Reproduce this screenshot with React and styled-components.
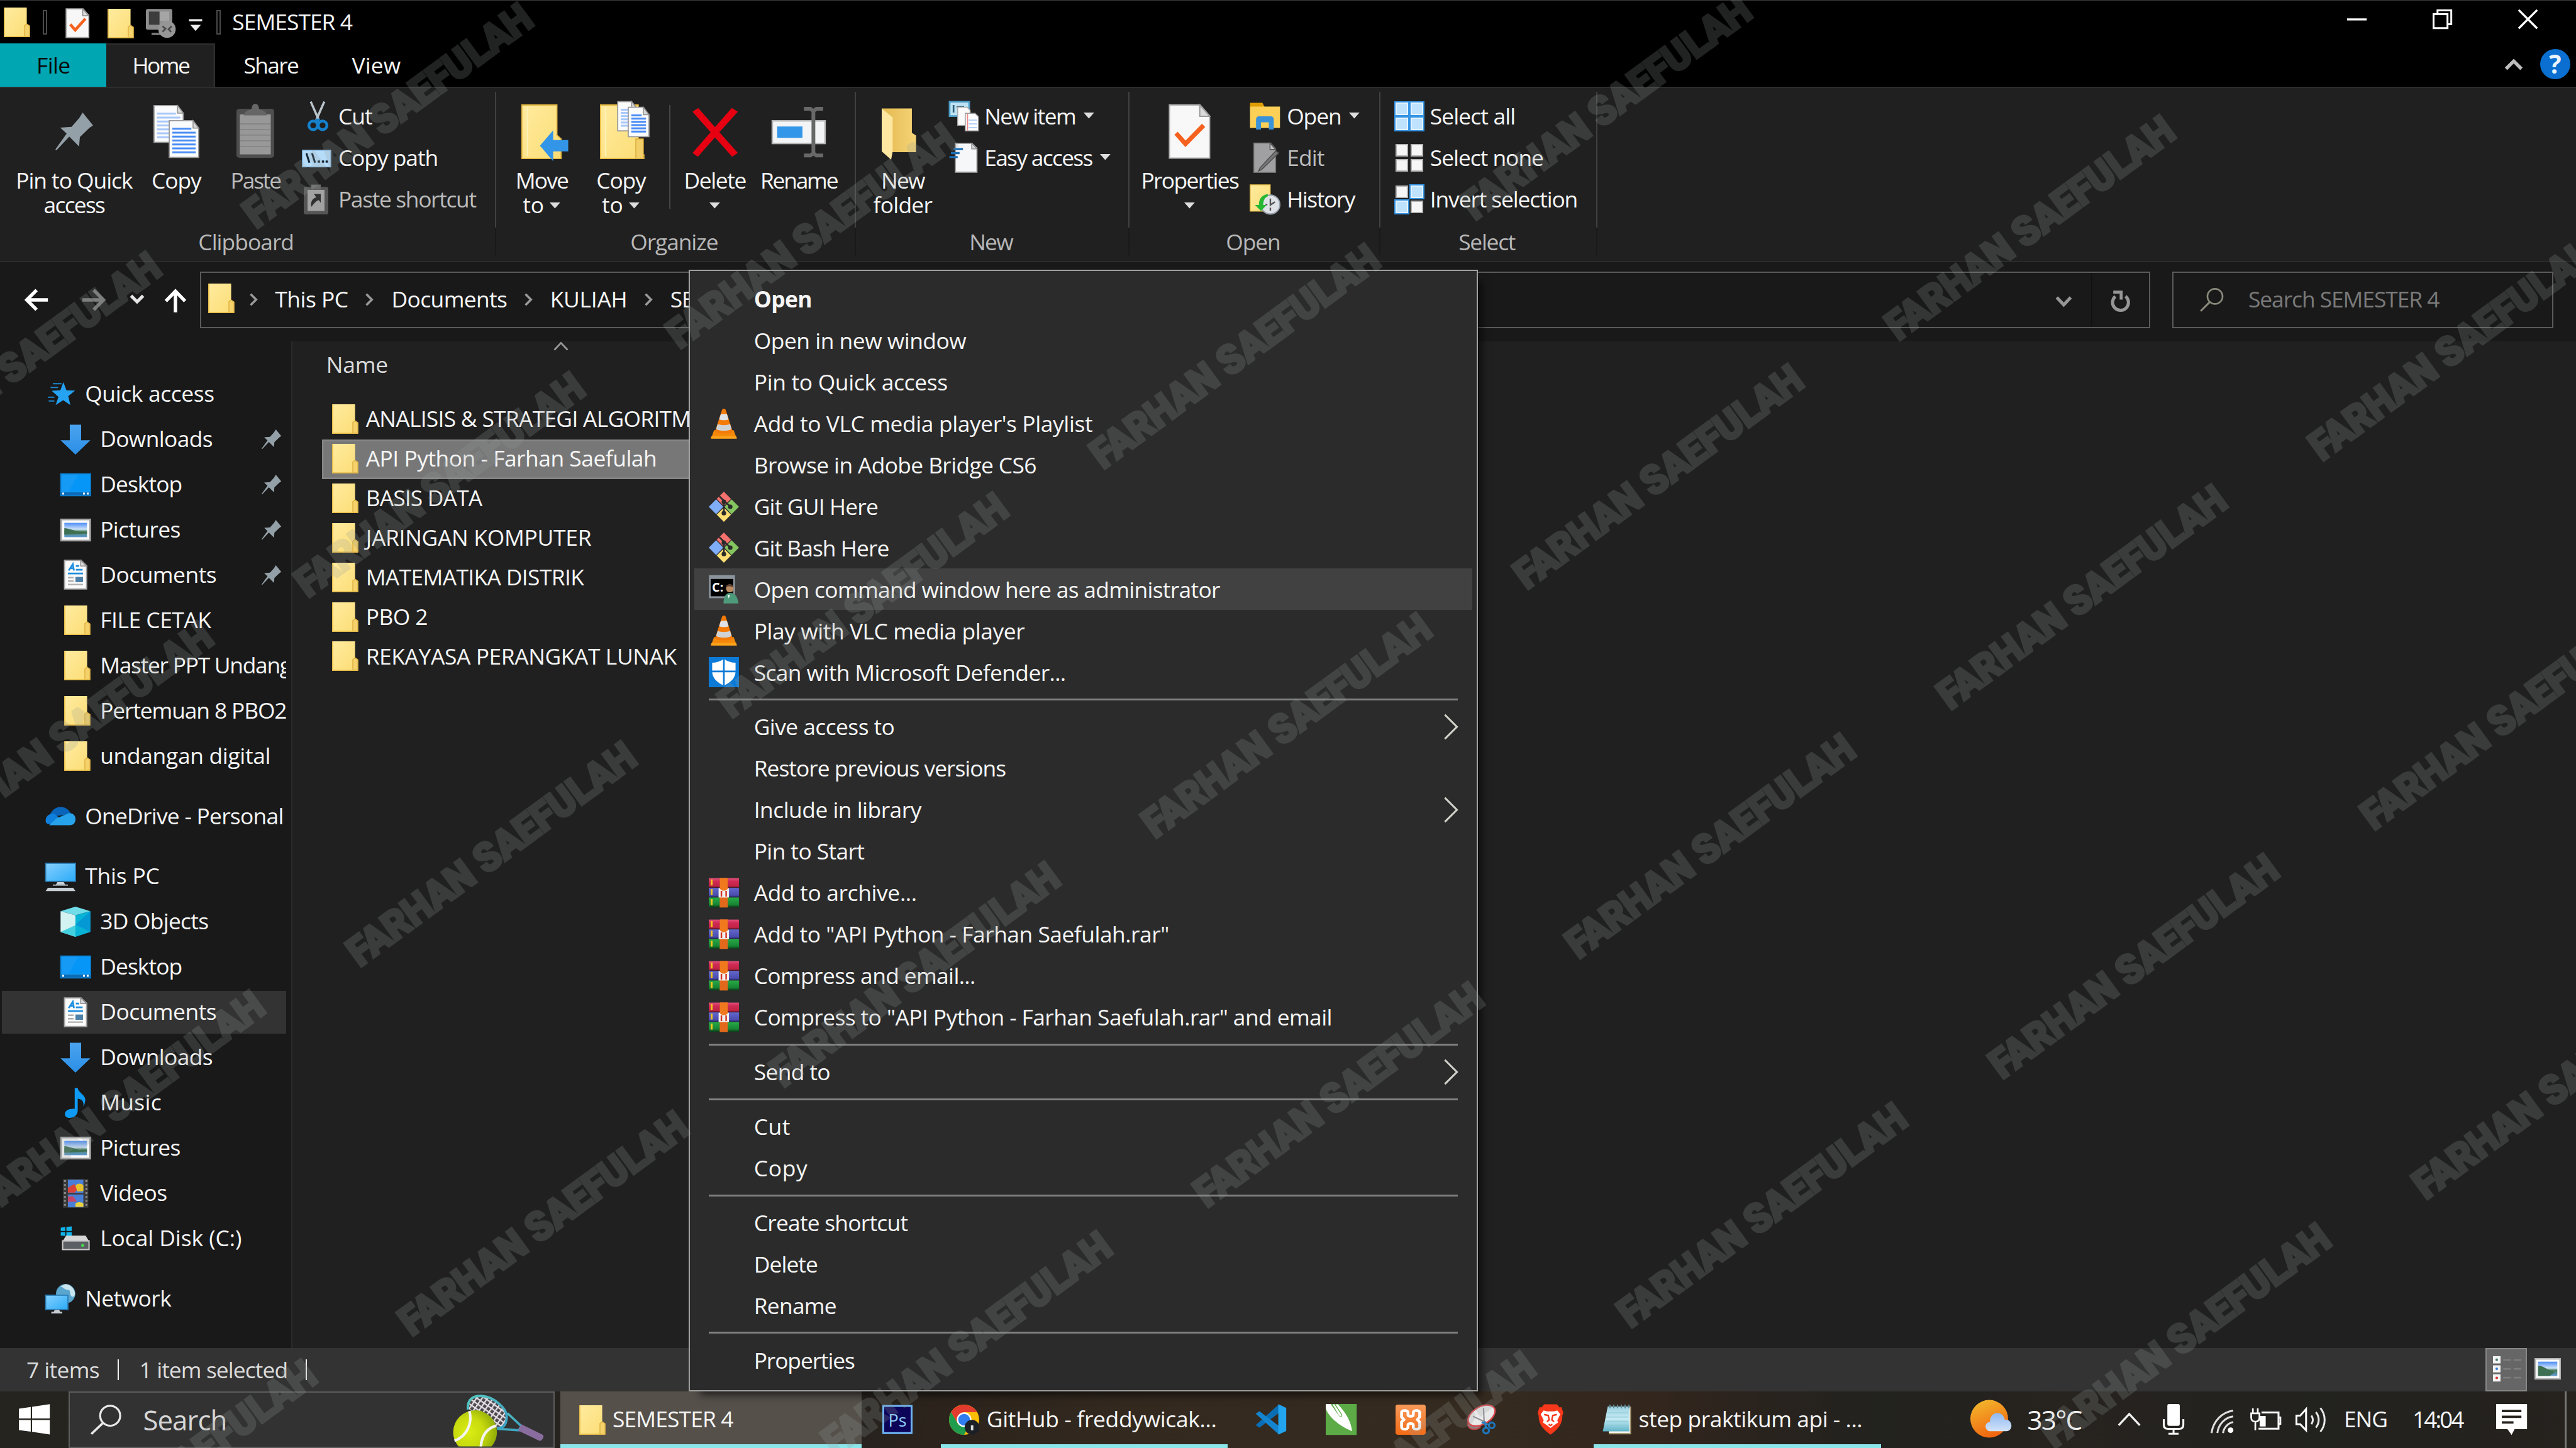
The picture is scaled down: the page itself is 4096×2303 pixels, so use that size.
import React from "react";
import styled, { createGlobalStyle, css } from "styled-components";

/* The desktop is designed on a 1366 x 768 grid; u() turns grid units into screen pixels. */
const UNIT = 4096 / 1366;
const u = (n) => `${+(n * UNIT).toFixed(3)}px`;

const FONT = '"Open Sans", "Noto Sans", "Liberation Sans", sans-serif';

const GlobalStyle = createGlobalStyle`
  * { box-sizing: border-box; }
  html, body { margin: 0; padding: 0; background: #000; }
  body { font-family: ${FONT}; color: #fff; overflow: hidden; }
`;

/* ---------- text ---------- */

const meter = document.createElement("canvas").getContext("2d");
const tracking = (text, width, size, weight) => {
  meter.font = `${weight} 100px ${FONT}`;
  const natural = (meter.measureText(text).width * size) / 100;
  return (width - natural) / text.length;
};

const TextBox = styled.span`
  flex: none;
  display: block;
  width: ${(p) => u(p.$w)};
  margin-left: ${(p) => u(p.$ml)};
  padding-bottom: ${(p) => u(p.$lift)};
  text-indent: ${u(-0.2)};
  white-space: pre;
  font-size: ${(p) => u(p.$size)};
  font-weight: ${(p) => p.$weight};
  line-height: ${(p) => u(p.$size + 1.4)};
  letter-spacing: ${(p) => u(p.$track)};
  color: ${(p) => p.$color};
`;

const Text = ({ w, ml = 0, size = 11.8, weight = 400, color = "#f6f6f6", lift = 0.6, children }) => (
  <TextBox
    $w={w}
    $ml={ml}
    $size={size}
    $weight={weight}
    $color={color}
    $lift={lift}
    $track={tracking(children, w + 0.6, size, weight)}
  >
    {children}
  </TextBox>
);

/* ---------- icons ---------- */

const Svg = styled.svg`
  flex: none;
  display: block;
  overflow: visible;
  width: ${(p) => u(p.$w)};
  height: ${(p) => u(p.$h)};
  margin-left: ${(p) => u(p.$ml)};
  margin-top: ${(p) => u(p.$mt)};
`;

const HiddenDefs = styled.svg`
  position: absolute;
  width: 0;
  height: 0;
`;

const Gradients = () => (
  <HiddenDefs aria-hidden="true">
    <defs>
      <linearGradient id="folder" x1="0" y1="0" x2="1" y2="1">
        <stop offset="0" stopColor="#ffeb9f" />
        <stop offset="1" stopColor="#fcdd75" />
      </linearGradient>
      <linearGradient id="folderDark" x1="0" y1="0" x2="1" y2="0">
        <stop offset="0" stopColor="#e3b94f" />
        <stop offset="1" stopColor="#f6d477" />
      </linearGradient>
      <linearGradient id="screen" x1="0" y1="0" x2="1" y2="1">
        <stop offset="0" stopColor="#86d0ff" />
        <stop offset="1" stopColor="#2babf8" />
      </linearGradient>
      <linearGradient id="arrow" x1="0" y1="0" x2="0" y2="1">
        <stop offset="0" stopColor="#4aa3ef" />
        <stop offset="1" stopColor="#2b8fe6" />
      </linearGradient>
      <linearGradient id="photo" x1="0" y1="0" x2="0" y2="1">
        <stop offset="0" stopColor="#4d8df5" />
        <stop offset="0.45" stopColor="#cfe4fb" />
        <stop offset="0.6" stopColor="#4b7f5e" />
        <stop offset="1" stopColor="#5f9bd6" />
      </linearGradient>
      <linearGradient id="sun" x1="0.2" y1="0" x2="0.6" y2="1">
        <stop offset="0" stopColor="#f2b82c" />
        <stop offset="1" stopColor="#f2620f" />
      </linearGradient>
      <linearGradient id="cloud" x1="0" y1="0" x2="0" y2="1">
        <stop offset="0" stopColor="#8fb8ef" />
        <stop offset="1" stopColor="#d3e3fa" />
      </linearGradient>
      <radialGradient id="ball" cx="0.35" cy="0.5" r="0.7">
        <stop offset="0" stopColor="#dcee14" />
        <stop offset="0.5" stopColor="#c6da0e" />
        <stop offset="1" stopColor="#86a307" />
      </radialGradient>
      <linearGradient id="frame" x1="0" y1="0" x2="1" y2="1">
        <stop offset="0" stopColor="#54c6bd" />
        <stop offset="1" stopColor="#3a9fc4" />
      </linearGradient>
      <linearGradient id="pad" x1="0" y1="0" x2="0" y2="1">
        <stop offset="0" stopColor="#9fd3e2" />
        <stop offset="0.5" stopColor="#c6ebf3" />
        <stop offset="1" stopColor="#5fb4c9" />
      </linearGradient>
      <linearGradient id="xampp" x1="0" y1="0" x2="0" y2="1">
        <stop offset="0" stopColor="#f79a5a" />
        <stop offset="1" stopColor="#f46b15" />
      </linearGradient>
      <linearGradient id="bookRed" x1="0" y1="0" x2="0" y2="1">
        <stop offset="0" stopColor="#e0507c" />
        <stop offset="0.35" stopColor="#cf2a55" />
        <stop offset="0.85" stopColor="#c02344" />
        <stop offset="1" stopColor="#5c1024" />
      </linearGradient>
      <linearGradient id="bookBlue" x1="0" y1="0" x2="0" y2="1">
        <stop offset="0" stopColor="#6367cc" />
        <stop offset="0.8" stopColor="#4a4cae" />
        <stop offset="1" stopColor="#26275e" />
      </linearGradient>
      <linearGradient id="bookGreen" x1="0" y1="0" x2="0" y2="1">
        <stop offset="0" stopColor="#27ab45" />
        <stop offset="0.7" stopColor="#178534" />
        <stop offset="1" stopColor="#0b3516" />
      </linearGradient>
      <pattern id="strings" width="2.4" height="2.4" patternUnits="userSpaceOnUse" patternTransform="rotate(35)">
        <rect width="2.4" height="2.4" fill="#4a484c" />
        <path d="M0 0h2.4M0 0v2.4" stroke="#e6dfe6" strokeWidth="1.5" />
      </pattern>
    </defs>
  </HiddenDefs>
);

const Sheet = ({ x, y, w, h, line = "#4a8cf5", rows = 7 }) => (
  <g>
    <path d={`M${x} ${y}h${w - 3}l3 4v${h - 4}h${-w}z`} fill="#fafbfc" stroke="#9a9a9a" strokeWidth="0.6" />
    <path d={`M${x + w - 3} ${y}v4h3z`} fill="#d8d8d8" stroke="#8f8f8f" strokeWidth="0.5" />
    {Array.from({ length: rows }, (_, i) => (
      <path
        key={i}
        d={`M${x + 1.6} ${y + 4.3 + (i * (h - 7)) / (rows - 1)}h${i === 0 ? w - 5.5 : w - 3.2}`}
        stroke={line}
        strokeWidth="1"
      />
    ))}
  </g>
);

const pinShape = "M14.5 0L20 6.8 18 8.2 13 13 12.6 18 7.4 12.8 0.6 20 0 19.6 6 11.2 2.6 8 8.6 7.6 12.6 3z";

const art = {
  folder: [14, 16, <>
    <path d="M0.3 0.3h11.9v8.8l1.5 1v5.6H0.3z" fill="url(#folder)" />
    <path d="M11 15.7V10l1.2-0.9 1.5 1v5.6z" fill="#f5d26b" stroke="#dfb445" strokeWidth="0.5" />
    <path d="M0.3 0.3v15.4h13.4" fill="none" stroke="#e6bd4a" strokeWidth="0.6" />
  </>],
  docCheck: [13, 16, <>
    <path d="M0.4 0.4h9l3 3.4v11.8H0.4z" fill="#f7f7f7" stroke="#a9a9a9" strokeWidth="0.6" />
    <path d="M9.2 0.4v3.6h3.2z" fill="#ddd" stroke="#8a8a8a" strokeWidth="0.5" />
    <path d="M2.6 8.6l2.6 3 5.4-6" fill="none" stroke="#f5611e" strokeWidth="1.5" />
  </>],
  undoPc: [16, 16, <>
    <rect x="0" y="0.4" width="14" height="11" rx="1" fill="#8d8d8d" />
    <rect x="1.6" y="1.8" width="5.6" height="7" fill="#3c3c3c" />
    <rect x="7.4" y="1.8" width="5" height="5" fill="#a5a5a5" />
    <path d="M3 13h6v1.3H3z" fill="#777" />
    <circle cx="11.2" cy="11.2" r="4.6" fill="#969696" />
    <path d="M8.8 12.5l1.6-1.6-1.6-1.3M13.6 9.6l-1.6 1.6 1.4 1.4" fill="none" stroke="#4a4a4a" strokeWidth="0.9" />
  </>],
  dropBar: [8, 6.4, <path d="M0.5 0.2h7v1.1h-7zM1.2 3.2h5.6L4 6.4z" fill="#eee" />],
  minimize: [10.4, 10.4, <path d="M0 5.3h10.4" stroke="#fff" strokeWidth="1.1" />],
  restore: [10.4, 10.4, <path d="M0.5 2.5h7.4v7.4H0.5zM2.6 2.4V0.5h7.3v7.3H8" fill="none" stroke="#fff" strokeWidth="1" />],
  close: [10.4, 10.4, <path d="M0.3 0.3l9.8 9.8M10.1 0.3L0.3 10.1" stroke="#fff" strokeWidth="1.1" />],
  ribbonUp: [10, 6, <path d="M0.9 5.5L5 1.4l4.1 4.1" fill="none" stroke="#bdbdbd" strokeWidth="1.8" />],
  help: [16, 16, <>
    <circle cx="8" cy="8" r="8" fill="#0a6fd0" />
    <text x="8" y="13" textAnchor="middle" fontFamily={FONT} fontWeight="700" fontSize="13.5" fill="#eaf4ff">?</text>
  </>],

  pinBig: [32, 32, <path transform="translate(6 6)" d={pinShape} fill="#94a0a8" />],
  pinSmall: [10.5, 10.5, <path transform="scale(0.52)" d={pinShape} fill="#94a0a8" />],
  copyBig: [32, 32, <>
    <Sheet x={4.3} y={2.3} w={15.5} h={19.5} line="#a8c8fa" />
    <Sheet x={12.4} y={10.3} w={15.6} h={19.5} />
  </>],
  pasteBig: [32, 32, <>
    <rect x="6" y="4" width="20" height="26" rx="1.5" fill="#4e4e4e" />
    <rect x="7.8" y="7" width="16.4" height="21.2" fill="#989898" />
    <path d="M10 7.5c0-2 2-2.8 4-3.2 0-4 4-4 4 0 2 0.4 4 1.2 4 3.2z" fill="#666" />
    <path d="M8 12h16M8 15h16M8 18h16M8 21h16M8 24h16" stroke="#858585" strokeWidth="0.6" />
  </>],
  moveBig: [32, 32, <>
    <path d="M5.6 2h18.6v16l2.200 2v10.400H5.600z" fill="url(#folder)" stroke="#e3b640" strokeWidth="0.6" />
    <path d="M8.6 3v26" stroke="#fff0b5" strokeWidth="0.8" />
    <path d="M15.2 23.6l7-8.200v5.200h8v6h-8v5.200z" fill="#3395e8" />
  </>],
  copyToBig: [32, 32, <>
    <path d="M5.3 2h20v26.4h3v2H5.3z" fill="url(#folder)" stroke="#e3b640" strokeWidth="0.6" />
    <path d="M24 30.4V20h4v10.4z" fill="#f2cf69" stroke="#dbae3e" strokeWidth="0.5" />
    <path d="M8 3v26" stroke="#fff0b5" strokeWidth="0.8" />
    <Sheet x={14.4} y={0.2} w={10.4} h={15.5} line="#a8c8fa" rows={6} />
    <Sheet x={20} y={3.2} w={11} h={15.6} rows={6} />
  </>],
  deleteBig: [32, 32, <path d="M4.4 5.6L7.400 3.6 16.3 13.8 25.2 3.6 28.4 5.600 18.6 16.400 28.400 27.400 25.400 29.400 16.3 19.200 7.200 29.400 4.400 27.400 14 16.400z" fill="#e60012" />],
  renameBig: [32, 32, <>
    <rect x="2" y="10.4" width="28" height="12" fill="#f2f4f5" stroke="#b5b5b5" strokeWidth="0.8" />
    <rect x="4.6" y="13.4" width="13.4" height="6" fill="#3396e8" />
    <path d="M18.8 4h3.4l1.6 1.2 1.6-1.2h3.6M18.8 28.8h3.4l1.6-1.2 1.6 1.2h3.6M23.8 4.9v23" fill="none" stroke="#686868" strokeWidth="2" />
  </>],
  newFolderBig: [32, 32, <>
    <path d="M5 3.8h16v13l2.2 1.4v8.8H9z" fill="url(#folderDark)" />
    <path d="M5 3.8l5.8 4.8v18L10 31 5 26.6z" fill="#fde7a1" />
  </>],
  propertiesBig: [32, 32, <>
    <path d="M5.5 2h16.3l5 5.8v22.4H5.5z" fill="#f8f8f9" stroke="#b0b0b0" strokeWidth="0.7" />
    <path d="M21.6 2v6h5.2z" fill="#dadada" stroke="#999" strokeWidth="0.6" />
    <path d="M9 17l5 5.6 9.6-9.8" fill="none" stroke="#f5611e" strokeWidth="2.4" />
  </>],
  down: [5.6, 3.2, <path d="M0 0h5.6L2.8 3.2z" fill="#dedede" />],

  cut: [16, 16, <>
    <path d="M4.7 0.2L9 10M11.9 0.2L7.6 10" stroke="#b9c3ca" strokeWidth="1.2" />
    <circle cx="6" cy="12.8" r="2.3" fill="none" stroke="#1581cc" strokeWidth="1.5" />
    <circle cx="11" cy="12.8" r="2.3" fill="none" stroke="#1581cc" strokeWidth="1.5" />
    <path d="M7.4 9.2h2v3h-2z" fill="#1581cc" />
  </>],
  copyPath: [16, 16, <>
    <rect x="0.3" y="4" width="15" height="8.8" fill="#b5dcf9" stroke="#8ec2ea" strokeWidth="0.5" />
    <path d="M2.4 5.6l1.6 5M5.4 5.6l1.6 5" stroke="#123" strokeWidth="1" />
    <path d="M8.4 9.4h1.2v1.2H8.4zM10.6 9.4h1.2v1.2h-1.2zM12.6 9.4h1.2v1.2h-1.2z" fill="#123" />
  </>],
  pasteShortcut: [16, 16, <>
    <rect x="1" y="1.4" width="13" height="14.6" rx="1" fill="#555" />
    <rect x="3" y="3" width="9" height="11.2" fill="#a2a2a2" />
    <path d="M5 0.2h5v2.6H5z" fill="#6a6a6a" />
    <path d="M5 12c-0.6-2.4 0.6-4.6 2.6-5L6.4 5.2H10v4.6L9 8.4C7.6 8.8 6.6 10 5 12z" fill="#303030" />
  </>],
  newItem: [16, 16, <>
    <rect x="0.3" y="0.3" width="10.4" height="7.6" fill="#bfe3f3" stroke="#4c9cc7" strokeWidth="0.9" />
    <path d="M2.4 2v4M4 3h4" stroke="#33617c" strokeWidth="0.9" />
    <path d="M4.6 3.2h5l1.6 1.6v8H4.6z" fill="#fbfbfb" stroke="#aaa" strokeWidth="0.5" />
    <path d="M8.6 6.4h5.2l1.8 1.8v7.6h-7z" fill="#fdfdfd" stroke="#999" strokeWidth="0.5" />
    <path d="M9.8 6.6v9" stroke="#ee8a8a" strokeWidth="0.6" />
    <path d="M10.4 10h4.6M10.4 12h4.6M10.4 14h4.6" stroke="#b7d1f7" strokeWidth="0.7" />
  </>],
  easyAccess: [16, 16, <>
    <path d="M3.4 0.4h8.8l2.6 2.6v12.6H3.4z" fill="#f6f7f8" stroke="#aaa" strokeWidth="0.6" />
    <path d="M12 0.4v2.9h2.8z" fill="#d5d5d5" stroke="#888" strokeWidth="0.4" />
    <path d="M2.4 3.4h5M1 5.5h4.6M0.2 7.6h4.4" stroke="#1c6fb5" strokeWidth="1.1" />
  </>],
  openSmall: [16, 16, <>
    <path d="M0.2 0.8h6.6l1.2 2.4H0.2z" fill="#e09d00" />
    <path d="M0.2 2.8h15.9v11.4H0.2z" fill="#fccf56" />
    <path d="M3.4 15V9.6c0-1 0.6-1.6 1.6-1.6h6.2c1 0 1.6 0.6 1.6 1.6V15h-2.6v-3.8H6V15z" fill="#3a93d8" />
  </>],
  edit: [16, 16, <>
    <path d="M2.2 0.2h9l2.6 3v12.6H2.2z" fill="#a0a0a2" stroke="#6d6d6d" strokeWidth="0.5" />
    <path d="M10.8 0.2v3.4h3z" fill="#c2c2c2" stroke="#555" strokeWidth="0.5" />
    <path d="M15.4 5.4L6.4 14.2 4.8 15l0.8-1.8L13.8 4.4z" fill="#777" stroke="#4f4f4f" strokeWidth="0.5" />
  </>],
  history: [16, 16, <>
    <path d="M0.3 0.3h10.6v14H0.3z" fill="url(#folder)" stroke="#e6bd4a" strokeWidth="0.5" />
    <circle cx="11" cy="10.8" r="5" fill="#dfe3e8" stroke="#9aa3ad" strokeWidth="0.7" />
    <path d="M11 7.6v3.4l2.4-1.6M11 12.4v1.6M8.4 10.8h1" fill="none" stroke="#555" strokeWidth="0.8" />
    <path d="M9.6 5.2C6 6 4.8 8.2 5 11H2.8l3.2 3.2L9 11H7.2c0-2.2 0.8-4 2.4-4.6z" fill="#27b733" />
  </>],
  selectAll: [16, 16, <>
    <rect width="16" height="16" fill="#3393e4" />
    <path d="M1 1h6v6H1zM9 1h6v6H9zM1 9h6v6H1zM9 9h6v6H9z" fill="#bfe3ff" stroke="#e4f3ff" strokeWidth="0.7" />
  </>],
  selectNone: [16, 16, <path d="M1 1h6v6H1zM9 1h6v6H9zM1 9h6v6H1zM9 9h6v6H9z" fill="#f6f6f6" stroke="#b4b4b4" strokeWidth="0.7" />],
  invert: [16, 16, <>
    <path d="M8 0h8v8H8zM0 8h8v8H0z" fill="#3393e4" />
    <path d="M1 1h6v6H1zM9 9h6v6H9z" fill="#f6f6f6" stroke="#b4b4b4" strokeWidth="0.7" />
    <path d="M9 1h6v6H9zM1 9h6v6H1z" fill="#bfe3ff" stroke="#e4f3ff" strokeWidth="0.7" />
  </>],

  back: [12.4, 12, <path d="M6.4 0.8L1.2 6l5.2 5.2M1 6h11.4" fill="none" stroke="#fff" strokeWidth="1.8" />],
  forward: [12.4, 12, <path d="M6 0.8L11.2 6 6 11.2M11.4 6H0" fill="none" stroke="#777" strokeWidth="1.8" />],
  recent: [8, 5, <path d="M0.8 0.8L4 4 7.2 0.8" fill="none" stroke="#e6e6e6" strokeWidth="1.7" />],
  up: [12, 12.6, <path d="M0.9 6.6L6 1.4l5.1 5.2M6 1.2v11.4" fill="none" stroke="#fff" strokeWidth="1.8" />],
  crumb: [4, 7, <path d="M0.5 0.6L3.4 3.5 0.5 6.4" fill="none" stroke="#9a9a9a" strokeWidth="1.2" />],
  addrDown: [9, 6.4, <path d="M0.8 1L4.5 4.9 8.2 1" fill="none" stroke="#969696" strokeWidth="1.7" />],
  refresh: [10.4, 11.4, <>
    <path d="M7.9 3.4a4.200 4.200 0 1 1-5.400 0.100" fill="none" stroke="#969696" strokeWidth="1.7" />
    <path d="M1.400 1.200h4.200v4" fill="none" stroke="#969696" strokeWidth="1.600" />
  </>],
  lensSmall: [13, 13, <>
    <circle cx="8" cy="4.8" r="4" fill="none" stroke="#8a8a7c" strokeWidth="0.9" />
    <path d="M5.2 7.8L0.4 12.6" stroke="#8a8a7c" strokeWidth="1" />
  </>],
  sortUp: [8, 5, <path d="M0.5 4.5L4 0.8l3.5 3.7" fill="none" stroke="#9a9a9a" strokeWidth="0.9" />],

  star: [16, 16, <>
    <path d="M9.6 1.6l1.6 4.3 4.6 0.2-3.6 2.9 1.1 4.8-3.8-2.6-4 2.6 1.5-4.4L3.4 6.2l4.6-0.3z" fill="#25a2f2" />
    <path d="M4 2.4h4.6M2.8 4.4h4M1.4 9.6h3.4M1.8 11.6h3" stroke="#1b87cf" strokeWidth="0.7" />
  </>],
  downloads: [16, 16, <path d="M5 0.2h6v8.2h4.9L8 16 0.1 8.4H5z" fill="url(#arrow)" />],
  desktop: [16, 16, <>
    <rect x="0.2" y="2.2" width="15.8" height="11.6" fill="#159bf5" stroke="#0a7fd0" strokeWidth="0.6" />
    <path d="M9.4 2.6h6.2v9H4.4z" fill="#0094f8" opacity="0.7" />
    <path d="M0.4 12h15.4v1.6H0.4z" fill="#0c6bb4" />
    <path d="M1 12.2h1v1H1zM12 12.2h1v1h-1zM14 12.2h1v1h-1z" fill="#fff" />
  </>],
  pictures: [16, 16, <>
    <rect x="0.4" y="2.4" width="15.4" height="11.2" fill="#fbfbfb" stroke="#a5a5a5" strokeWidth="0.9" />
    <rect x="2.1" y="4.2" width="12" height="7.6" fill="url(#photo)" />
    <path d="M2.1 7c2.4 0 5 1.4 7.6 1.8 2 0.2 3 0.2 4.4 0.2v0.8L2.1 10.4z" fill="#3e6f52" />
  </>],
  documents: [16, 16, <>
    <path d="M2.2 0.4h8.8l2.9 2.8v12.4H2.2z" fill="#fbfbfb" stroke="#a5a5a5" strokeWidth="0.7" />
    <path d="M10.8 0.4v3h3.1z" fill="#ddd" stroke="#888" strokeWidth="0.5" />
    <path d="M4.4 5.8l2.2-3.4 0.6 3.4M5.2 4.6h2M8.2 3.4h1.8M8.2 5.4h3.6M4 7.4h8" fill="none" stroke="#1f8fe0" strokeWidth="0.9" />
    <path d="M4 9.6h3M4 11.4h3M4 13.2h8" stroke="#b0b0b0" strokeWidth="0.8" />
    <path d="M8 9.2h4v2.8H8z" fill="#4f81a8" />
  </>],
  onedrive: [16, 16, <>
    <path d="M2 8.4C3.4 4.4 6 3 8.6 3.2c2.4 0.2 4.2 1.6 5 3.8z" fill="#0a64b9" />
    <path d="M0.2 10.4C0.2 7.6 2.6 6.4 5 6.8l6 5.4H2.4C1 12.4 0.2 11.6 0.2 10.4z" fill="#0f7fdd" />
    <path d="M2 12.8l4-3.6 6.6-2.8c2.4 0 3.6 1.6 3.4 3.6-0.2 1.8-1.2 2.8-3 2.8z" fill="#27a3ec" />
  </>],
  thisPc: [16, 16, <>
    <rect x="0.2" y="1" width="15.8" height="9.6" fill="url(#screen)" stroke="#2c7fb8" strokeWidth="0.6" />
    <path d="M6.4 11h3.4l0.8 1.4H5.6z" fill="#ccd3d9" />
    <path d="M1.4 14h13.4l1.2 1.8H0.2z" fill="#c8ced5" />
    <path d="M4 12.6h8" stroke="#9aa2aa" strokeWidth="0.7" />
  </>],
  objects3d: [16, 16, <>
    <path d="M0.1 2.4L8 0l7.9 2.4L8 4.6z" fill="#6fdce8" />
    <path d="M0.1 2.4L8 4.6V16l-7.9-2.6z" fill="#d3f3f3" />
    <path d="M0.1 13.4L8 9.8V16z" fill="#45d0df" />
    <path d="M15.9 2.4L8 4.6V16l7.9-2.6z" fill="#07b4d6" />
    <path d="M15.9 2.4L8 9.6 15.9 13.4z" fill="#0499d4" />
  </>],
  music: [16, 16, <path d="M7.6 0.2h1.6c0.4 2.6 3.8 3.4 4 6 0 1.6-0.4 2.8-1 3.6 0.4-2.8-1-3.8-3-4v6.4C9.2 14.6 7 16 4.8 16 3.4 16 2.4 15.2 2.4 14c0-1.8 2-3 5.2-2.8z" fill="#0f9bf5" />],
  videos: [16, 16, <>
    <rect x="1.4" y="0.4" width="13.4" height="15.2" fill="#3b3b3b" />
    <path d="M2.4 1v14.4M13.8 1v14.4" stroke="#8c8c8c" strokeWidth="1" strokeDasharray="1 1.1" />
    <rect x="4" y="0.8" width="8.2" height="7" fill="#4a7fd8" />
    <rect x="4" y="8.6" width="8.2" height="6.8" fill="#4a7fd8" />
    <path d="M4 5l3.4-2 1.6 3-1.4 1.6H4z" fill="#d8433c" />
    <path d="M8 4c1-1.6 3.4-1.4 4.2-0.2v3L9 7z" fill="#e8c22c" />
    <path d="M4 9.6h2.8l2 2.8H4z" fill="#c4456a" />
    <path d="M8 13.4c1-1 3-1 4.2 0v1.8H8z" fill="#ecd23c" />
  </>],
  disk: [16, 16, <>
    <path d="M0.2 2.2l2.4-0.3v2H0.2zM3.2 1.8l2.8-0.3v2.4H3.2zM0.2 4.6h2.4v2L0.2 6.4zM3.2 4.6H6V7l-2.8-0.3z" fill="#10b5ea" />
    <path d="M3 6.4h10.4l1.8 3H1.2z" fill="#d6d6d6" />
    <rect x="1.2" y="9.2" width="14" height="4.6" fill="#5c5f63" stroke="#c9c9c9" strokeWidth="0.7" />
    <circle cx="11.8" cy="11.6" r="0.8" fill="#46e04c" />
  </>],
  network: [16, 16, <>
    <circle cx="10.8" cy="5.2" r="5.1" fill="#5aa6cf" />
    <path d="M8 1.4c2 0.4 2.4 2 4.6 1.8 1 1 0 2.4 1.6 3.6 1 0 1.4-0.6 1.6-1.4C15.6 2.6 13.4 0.2 10.6 0.1z" fill="#c9e6ee" />
    <rect x="0.2" y="6" width="11.8" height="7.6" fill="url(#screen)" stroke="#2c7fb8" strokeWidth="0.6" />
    <path d="M5 13.8h2.4l0.4 1H9v0.9H3.2v-0.9h1.4z" fill="#c8ced5" />
  </>],

  vlc: [16, 16, <>
    <path d="M2.8 11.4h10.4l1.6 4.4H1.2z" fill="#f48a0c" />
    <path d="M1.4 14.6h13.2l0.3 1.3H1.1z" fill="#fba21c" />
    <path d="M8 0c0.6 0 0.9 0.4 1.1 1l3.6 11.2c-1.4 1.4-8 1.4-9.4 0L6.9 1C7.1 0.4 7.4 0 8 0z" fill="#f47b08" />
    <path d="M6.4 2.8h3.2l0.9 2.8c-1 0.7-4 0.7-5 0z" fill="#dfe3e6" />
    <path d="M4.7 8.2c2 0.7 4.6 0.7 6.6 0l0.8 2.6c-2 1.2-6.2 1.2-8.2 0z" fill="#cfd3d6" />
  </>],
  git: [16, 16, <>
    <path d="M8 0l3.8 3.8L8 7.6 4.2 3.8z" fill="#f5716e" />
    <path d="M3.9 4.1L7.7 8l-3.8 3.9L0 8z" fill="#7fadf8" />
    <path d="M12.1 4.1L16 8l-3.9 3.9L8.3 8z" fill="#84c560" />
    <path d="M8 8.4l3.8 3.8L8 16l-3.8-3.8z" fill="#fbdd72" />
    <path d="M5.6 2.4L8 4.8v7M8 4.8L11.6 8" fill="none" stroke="#2b2b2b" strokeWidth="0.9" />
    <circle cx="8" cy="5.4" r="1.2" fill="#2b2b2b" />
    <circle cx="11.4" cy="8" r="1.2" fill="#2b2b2b" />
    <circle cx="8" cy="11.4" r="1.2" fill="#2b2b2b" />
  </>],
  cmdAdmin: [16, 16, <>
    <rect x="0.1" y="0.6" width="13.8" height="12.2" fill="#8b949c" />
    <rect x="1" y="2.6" width="12" height="9.2" fill="#000" />
    <text x="1.7" y="9.5" fontFamily={FONT} fontSize="6.6" fontWeight="700" fill="#fff">C:</text>
    <path d="M7.8 15.6c0-3.6 1.4-5.6 3.4-5.6 2.8 0 4 2 4.6 5.6z" fill="#4e9b7b" />
    <circle cx="11.2" cy="7.6" r="2.1" fill="#b98b62" />
    <path d="M9.2 6.8c0.4-2 3.6-2 4 0.4-1.6-0.8-2.8-0.8-4-0.4z" fill="#5a4032" />
    <path d="M10 11l0.6 2 0.6-2z" fill="#fff" />
  </>],
  defender: [16, 16, <>
    <rect width="16" height="16" fill="#0c7bd8" />
    <path d="M8 1c2 1.4 4 2 6.2 2v4.6c0 3.6-2.8 6-6.2 7.6-3.4-1.6-6.2-4-6.2-7.6V3C4 3 6 2.4 8 1z" fill="#fff" />
    <path d="M8 0.8v14.6M1.6 7.6h12.8" stroke="#0c7bd8" strokeWidth="0.9" />
  </>],
  rar: [16, 16, <>
    <rect y="0.2" width="16" height="5" fill="url(#bookRed)" />
    <rect y="5.4" width="16" height="4.9" fill="url(#bookBlue)" />
    <rect y="10.5" width="16" height="5.3" fill="url(#bookGreen)" />
    <path d="M1.5 0.9v3.2M1.5 6v3.2M1.5 11.3v3.2" stroke="#f2c61e" strokeWidth="1" />
    <path d="M5.8 0.2h4.300v15.600H5.800z" fill="#e2691b" />
    <path d="M5.2 5.600h5.500v4.900H5.200z" fill="#f1efee" />
    <path d="M6.700 7v3M9.200 7v3" stroke="#d6331f" strokeWidth="0.800" />
    <path d="M6 0.200h4v5.800l-1.200 0.800h-1.600L6 6z" fill="#f0791e" />
  </>],
  submenu: [8, 14, <path d="M0.8 0.6L7.2 7 0.8 13.4" fill="none" stroke="#d4d4cc" strokeWidth="1" />],

  viewDetails: [16, 14, <>
    <path d="M0 0h4v3.8H0zM0 4.8h4v3.8H0zM0 9.6h4v3.8H0z" fill="#f4f4f4" />
    <circle cx="2" cy="1.9" r="0.7" fill="#4a7f6a" />
    <circle cx="2" cy="6.7" r="0.7" fill="#3f7de0" />
    <circle cx="2" cy="11.5" r="0.7" fill="#d33" />
    <path d="M5.4 2h4M11 2h4M5.4 6.7h4M11 6.7h4M5.4 11.4h4M11 11.4h4" stroke="#7d7d7d" strokeWidth="0.9" />
  </>],
  viewLarge: [14, 11.4, <>
    <rect x="0.4" y="0.4" width="13.2" height="10.6" fill="#fbfbfb" stroke="#b5b5b5" strokeWidth="0.8" />
    <rect x="1.9" y="1.9" width="10.2" height="7.6" fill="url(#photo)" />
    <path d="M1.9 4c3 0 5 2.6 9 3.4L8 9.5H1.9z" fill="#3e6f52" />
  </>],

  windows: [16.4, 16.4, <path d="M0 2.5l6.3-0.9v6.1H0zM7 1.5L16.4 0.1v7.6H7zM0 8.5h6.3v6.2L0 13.8zM7 8.5h9.4v7.7L7 14.8z" fill="#fff" />],
  lensBig: [16.4, 16, <>
    <circle cx="10.4" cy="5.9" r="5.3" fill="none" stroke="#e8e8e8" strokeWidth="1.1" />
    <path d="M6.6 9.7L0.4 15.6" stroke="#e8e8e8" strokeWidth="1.2" />
  </>],
  tennis: [48, 30, <>
    <path d="M29 11.6L36.3 18.4 35 20.6 23.500 19.800" fill="none" stroke="url(#frame)" strokeWidth="1.2" />
    <path d="M8 9C7.600 4.400 10.400 2.200 15.400 2.400 22 2.800 28.800 9.400 28.600 13.400 28.400 18 26.800 19.600 23.400 19.400z" fill="url(#strings)" />
    <path d="M8 9.600C7.600 4.400 10.400 2.200 15.400 2.400 22 2.800 28.800 9.400 28.600 13.400 28.400 18 26.800 19.600 23.400 19.400" fill="none" stroke="url(#frame)" strokeWidth="1.3" />
    <path d="M36.400 17.800l11 5.400c1 0.600-0.400 3.200-1.600 2.600L35 20.600z" fill="#8a6d9f" stroke="#8a6d9f" strokeWidth="0.6" />
    <clipPath id="ballClip"><path d="M-1 0h30v29.200H-1z" /></clipPath>
    <g clipPath="url(#ballClip)">
      <circle cx="11.8" cy="21.6" r="11.6" fill="url(#ball)" />
      <path d="M8.800 10.400C10.600 17.400 7 24 0.900 26.200M23 18.200C17.400 19.800 14.800 24.400 14.800 31" fill="none" stroke="#f4f4f0" strokeWidth="1.4" />
    </g>
  </>],
  photoshop: [16, 16, <>
    <rect x="0.5" y="0.7" width="15" height="14.4" fill="#0c0458" stroke="#6fb4f2" strokeWidth="1" />
    <text x="8" y="11.6" textAnchor="middle" fontFamily={FONT} fontSize="9" fill="#8fd0fa">Ps</text>
  </>],
  chrome: [16, 16, <>
    <circle cx="8" cy="8" r="8" fill="#fbbc05" />
    <path d="M1.1 4A8 8 0 0 1 14.9 4H8L4.6 10z" fill="#e33b2e" />
    <path d="M1.1 4A8 8 0 0 0 8 16l3.4-6L8 8 4.6 10z" fill="#1f9d4d" />
    <circle cx="8" cy="8" r="3.9" fill="#fff" />
    <circle cx="8" cy="8" r="3.1" fill="#2f7df0" />
    <circle cx="12.2" cy="12" r="3.9" fill="#1c2026" />
    <path d="M11.6 11h1.3v2.6h-1.3z" fill="#dcdcdc" />
  </>],
  vscode: [16.4, 16.4, <>
    <path d="M0.2 11.2l2 1.4L12.4 4.8V0.3z" fill="#0b6eb5" />
    <path d="M0.2 5.2l2-1.4 10.2 7.8v4.5z" fill="#1484cf" />
    <path d="M12.2 0.1l4.2 2v12.2l-4.2 2z" fill="#23a4ee" />
  </>],
  corel: [16.4, 16.4, <>
    <path d="M0 0h16.400v16.400H0z" fill="#5cab46" />
    <path d="M0 0h2.600L6.800 6C7.800 7.400 9 7 8.600 5.400L5.200 0.200h1.200C11 4.800 13.400 9.600 14 14.400 7 11.600 1.600 6.800 0 2.400z" fill="#fff" />
    <path d="M3.600 0.200h1l3.600 5.400c0.400 1-0.600 1.200-1.200 0.400z" fill="#fff" />
  </>],
  xampp: [16, 16, <>
    <rect width="16" height="16" rx="1.2" fill="url(#xampp)" />
    <path d="M3.2 4.2c0-1.4 3.4-1.4 3.4 0v1.2c0 1 2.8 1 2.8 0V4.2c0-1.4 3.4-1.4 3.4 0v2.4L11.6 8l1.2 1.2V12c0 1.4-3.4 1.4-3.4 0v-1.2c0-1-2.8-1-2.8 0V12c0 1.4-3.4 1.4-3.4 0V9.2L4.4 8 3.2 6.6z" fill="none" stroke="#fff" strokeWidth="1.5" />
  </>],
  snip: [15, 16, <>
    <path d="M0.400 8.600v2.600c1 2.400 4.400 2.400 6.400 1l0.600-2.600z" fill="#8d8180" stroke="#c23f42" strokeWidth="0.6" />
    <ellipse cx="7.6" cy="5.8" rx="7.8" ry="4.6" transform="rotate(-30 7.6 5.8)" fill="#e9e9ea" stroke="#d7474c" strokeWidth="0.8" />
    <path d="M8.600 1.800L9 9.200M9 9L3 6.200" stroke="#8f8f94" strokeWidth="0.7" />
    <circle cx="13" cy="11" r="1.500" fill="none" stroke="#1f74b8" strokeWidth="1.100" />
    <circle cx="10" cy="13.800" r="1.500" fill="none" stroke="#1f74b8" strokeWidth="1.100" />
    <path d="M7.600 9.400l4.200 1.400M9.200 8.800l0.800 3.600" stroke="#2c7fbf" strokeWidth="1" />
  </>],
  brave: [13.6, 16.4, <>
    <path d="M3.4 0.2h6.8l1.4 1.6 1 -0.1 1 3-0.5 1.3c0 4.4-1.8 7-6.3 10.3C2.3 13 0.5 10.4 0.5 6L0 4.7l1-3 1 0.1z" fill="#f8381a" />
    <path d="M3.2 3.4l1.8 0.5h3.6l1.8-0.5 1.6 2-1.6 3.2 0.4 1.2-2 1.4-2 1.6-2-1.6-2-1.4 0.4-1.2L1.6 5.4z" fill="#fff" />
    <path d="M3.4 5.6l2.2 0.5 0.5 2.3-1.2 1M10.2 5.6L8 6.1 7.5 8.4l1.2 1M5.8 10.8l1 0.6 1-0.6" fill="none" stroke="#f8381a" strokeWidth="0.8" />
  </>],
  notepad: [15.4, 16, <>
    <path d="M3.4 1h11.8v14.8H3.4z" fill="#a59a75" />
    <path d="M3.4 1h11.2v14H3.4z" fill="#f4f2ea" />
    <path d="M2.8 1h11.4v13.2H0.2z" fill="url(#pad)" />
    <path d="M4 0v2M6 0v2M8 0v2M10 0v2M12 0v2M14 0v2" stroke="#5e8c99" strokeWidth="0.7" />
    <path d="M2.6 4.4h11M2.2 6.6h11.4M1.8 8.8h11.8M1.4 11h12.2" stroke="#8fc9d8" strokeWidth="0.4" />
  </>],
  weather: [22, 21, <>
    <circle cx="10" cy="10.2" r="10" fill="url(#sun)" />
    <path d="M11 16.8c-3.6 0-4-4.6-0.6-5 0-5.8 6.8-6.2 7.8-1.2 4.2-0.4 5 5.8 1 6.2z" fill="url(#cloud)" />
  </>],
  trayUp: [12.4, 7.6, <path d="M0.6 7L6.2 1l5.6 6" fill="none" stroke="#f0f0f0" strokeWidth="1.1" />],
  mic: [11.4, 16.4, <>
    <rect x="2.4" y="0" width="6.6" height="11.6" rx="1" fill="#fff" />
    <path d="M0.5 8v3c0 1.4 0.8 2.2 2.2 2.2h6c1.4 0 2.2-0.8 2.2-2.2V8M5.7 13.2v2.2M3 15.8h5.4" fill="none" stroke="#fff" strokeWidth="1" />
  </>],
  wifi: [12.2, 12.6, <>
    <circle cx="10.6" cy="10.9" r="1.5" fill="#fff" />
    <path d="M0.5 12.4C1.4 6 6 1.4 12 0.5M3.6 12.4C4 8 7.4 4.2 12 3.6M6.6 12.4c0.4-2.8 2.4-5.2 5.4-5.8" fill="none" stroke="#dedede" strokeWidth="1" />
  </>],
  battery: [16.4, 12, <>
    <path d="M6 2.2h9v8.6H4.4" fill="none" stroke="#fff" strokeWidth="1" />
    <path d="M15 4.8h1v3.4h-1" fill="none" stroke="#fff" strokeWidth="0.9" />
    <rect x="5" y="4" width="3.2" height="5.6" fill="#fff" />
    <path d="M1.4 0v2.6M4 0v2.6M0.5 2.6h4.4v2.2c0 1.600-1 2.200-2.200 2.200S0.500 6.400 0.500 4.800zM2.700 7v4.600" fill="none" stroke="#fff" strokeWidth="0.9" />
  </>],
  speaker: [16.4, 14, <>
    <path d="M0.5 4.8h2L5.600 1.400v11.200L2.500 9.400h-2z" fill="none" stroke="#fff" strokeWidth="1" />
    <path d="M8.4 4.8c1 1.4 1 3.2 0 4.6M10.8 3c2 2.4 2 5.8 0 8.2M13.2 0.8c3 3.8 3 8.800 0 12.600" fill="none" stroke="#e8e8e8" strokeWidth="1" />
  </>],
  action: [16.4, 16.4, <>
    <path d="M0 0h16.4v13.3H9.8L8.2 16.4 6 13.3H0z" fill="#fff" />
    <path d="M3 3.7h10.4M3 6.8h10.4M3 9.8h6.2" stroke="#26221e" strokeWidth="1.2" />
  </>],
};

const Icon = ({ name, ml = 0, mt = 0 }) => {
  const [w, h, shapes] = art[name];
  return (
    <Svg $w={w} $h={h} $ml={ml} $mt={mt} viewBox={`0 0 ${w} ${h}`}>
      {shapes}
    </Svg>
  );
};

/* ---------- window chrome ---------- */

const Screen = styled.div`
  position: relative;
  display: flex;
  flex-direction: column;
  width: 4096px;
  height: 2303px;
  overflow: hidden;
  background: #202020;
`;

const TitleBar = styled.header`
  flex: none;
  display: flex;
  align-items: center;
  height: ${u(23)};
  padding: ${u(0.5)} ${u(2.6)} 0 ${u(2)};
  background: #000;
  box-shadow: inset 0 1px 0 #3a3a3a;
`;

const TitleDivider = styled.i`
  flex: none;
  width: ${u(2.4)};
  height: ${u(13)};
  margin-left: ${(p) => u(p.$ml)};
  border: ${u(0.7)} solid #4a4a4a;
`;

const WindowButtons = styled.div`
  display: flex;
  margin-left: auto;
`;

const WindowButton = styled.button`
  display: flex;
  align-items: center;
  justify-content: center;
  width: ${u(45.5)};
  height: ${u(20)};
  padding: 0 0 ${u(3)};
  border: 0;
  background: none;
`;

const TabRow = styled.nav`
  flex: none;
  display: flex;
  align-items: center;
  height: ${u(23)};
  padding-right: ${u(3)};
  background: #000;
`;

const Tab = styled.button`
  display: flex;
  align-items: center;
  justify-content: center;
  width: ${(p) => u(p.$w)};
  height: 100%;
  padding: ${u(1)} 0 0;
  border: 0;
  font: inherit;
  background: ${(p) => (p.$kind === "file" ? "#00a6b2" : p.$kind === "active" ? "#202020" : "#000")};
  ${(p) => p.$kind === "active" && css`box-shadow: inset 0 ${u(0.8)} 0 #2d2d2d, inset -${u(0.8)} 0 0 #2d2d2d;`}
`;

const TabTools = styled.div`
  display: flex;
  align-items: center;
  margin-left: auto;
  padding-bottom: ${u(1)};
`;

/* ---------- ribbon ---------- */

const Ribbon = styled.section`
  flex: none;
  display: flex;
  height: ${u(93)};
  padding-top: ${u(2)};
  background: #202020;
  border-top: ${u(1)} solid #2d2d2d;
  border-bottom: ${u(1)} solid #2b2b2b;
`;

const Group = styled.div`
  flex: none;
  display: flex;
  flex-direction: column;
  width: ${(p) => u(p.$w)};
`;

const GroupBody = styled.div`
  display: flex;
  align-items: flex-start;
  height: ${u(72)};
  padding-left: ${(p) => u(p.$pl)};
  border-right: ${u(0.8)} solid #404040;
`;

const GroupCaption = styled.div`
  display: flex;
  align-items: center;
  justify-content: center;
  height: ${u(14.6)};
  padding-top: ${u(1.4)};
  padding-right: ${u(1.6)};
  border-right: ${u(0.8)} solid #191919;
`;

const BigButton = styled.div`
  flex: none;
  display: flex;
  flex-direction: column;
  align-items: center;
  width: ${(p) => u(p.$w)};
  margin-left: ${(p) => u(p.$ml)};
  padding-top: ${u(5)};
`;

const BigIcon = styled.div`
  height: ${u(35.8)};
`;

const BigLine = styled.div`
  display: flex;
  align-items: center;
  height: ${u(13)};
`;

const InnerRule = styled.i`
  flex: none;
  width: ${u(0.8)};
  height: ${u(55)};
  margin: ${u(7)} 0 0 ${u(10.5)};
  background: #464646;
`;

const SmallColumn = styled.div`
  flex: none;
  margin-left: ${(p) => u(p.$ml)};
  padding-top: ${u(2)};
`;

const SmallButton = styled.div`
  display: flex;
  align-items: center;
  height: ${u(22)};
`;

const DIM = "#bcbcbc";
const CAPTION = "#b8b8b8";

const Big = ({ icon, w, ml = 0, lines, color }) => (
  <BigButton $w={w} $ml={ml}>
    <BigIcon><Icon name={icon} /></BigIcon>
    {lines.map(([label, width, arrow], i) => (
      <BigLine key={i}>
        {label && <Text w={width} color={color}>{label}</Text>}
        {arrow && <Icon name="down" ml={label ? 3.4 : 0} />}
      </BigLine>
    ))}
  </BigButton>
);

const Small = ({ icon, label, w, gap, arrow, color }) => (
  <SmallButton>
    <Icon name={icon} />
    <Text w={w} ml={gap} color={color} lift={0}>{label}</Text>
    {arrow && <Icon name="down" ml={4.6} mt={-1} />}
  </SmallButton>
);

const RibbonBar = () => (
  <Ribbon>
    <Group $w={263}>
      <GroupBody $pl={8.2}>
        <Big icon="pinBig" w={62} lines={[["Pin to Quick", 61.2], ["access", 31.6]]} />
        <Big icon="copyBig" w={30} ml={8.2} lines={[["Copy", 25.7]]} />
        <Big icon="pasteBig" w={30} ml={12} lines={[["Paste", 25.9]]} color={DIM} />
        <SmallColumn $ml={9.6}>
          <Small icon="cut" label="Cut" w={17.4} gap={3.6} />
          <Small icon="copyPath" label="Copy path" w={52.2} gap={3.6} />
          <Small icon="pasteShortcut" label="Paste shortcut" w={72.4} gap={3.6} color={DIM} />
        </SmallColumn>
      </GroupBody>
      <GroupCaption><Text w={50} color={CAPTION}>Clipboard</Text></GroupCaption>
    </Group>
    <Group $w={191}>
      <GroupBody $pl={9.2}>
        <Big icon="moveBig" w={30} lines={[["Move", 27.2], ["to", 10.6, true]]} />
        <Big icon="copyToBig" w={30} ml={12} lines={[["Copy", 25.5], ["to", 10.6, true]]} />
        <InnerRule />
        <Big icon="deleteBig" w={34} ml={6.5} lines={[["Delete", 32.2], [null, 0, true]]} />
        <Big icon="renameBig" w={42} ml={6.5} lines={[["Rename", 40.2]]} />
      </GroupBody>
      <GroupCaption><Text w={45.8} color={CAPTION}>Organize</Text></GroupCaption>
    </Group>
    <Group $w={145}>
      <GroupBody $pl={8.6}>
        <Big icon="newFolderBig" w={32} lines={[["New", 22.3], ["folder", 30.6]]} />
        <SmallColumn $ml={8.6}>
          <Small icon="newItem" label="New item" w={47.8} gap={3} arrow />
          <Small icon="easyAccess" label="Easy access" w={56.6} gap={3} arrow />
        </SmallColumn>
      </GroupBody>
      <GroupCaption><Text w={22.4} color={CAPTION}>New</Text></GroupCaption>
    </Group>
    <Group $w={133}>
      <GroupBody $pl={5.8}>
        <Big icon="propertiesBig" w={52} lines={[["Properties", 51], [null, 0, true]]} />
        <SmallColumn $ml={6}>
          <Small icon="openSmall" label="Open" w={28.2} gap={3.8} arrow />
          <Small icon="edit" label="Edit" w={19.2} gap={3.8} color={DIM} />
          <Small icon="history" label="History" w={35.4} gap={3.8} />
        </SmallColumn>
      </GroupBody>
      <GroupCaption><Text w={28.2} color={CAPTION}>Open</Text></GroupCaption>
    </Group>
    <Group $w={115}>
      <GroupBody $pl={7.3}>
        <SmallColumn $ml={0}>
          <Small icon="selectAll" label="Select all" w={44.6} gap={3.2} />
          <Small icon="selectNone" label="Select none" w={59.5} gap={3.2} />
          <Small icon="invert" label="Invert selection" w={77.6} gap={3.2} />
        </SmallColumn>
      </GroupBody>
      <GroupCaption><Text w={29.4} color={CAPTION}>Select</Text></GroupCaption>
    </Group>
  </Ribbon>
);

/* ---------- navigation bar ---------- */

const NavBar = styled.div`
  flex: none;
  display: flex;
  align-items: center;
  height: ${u(42)};
  padding: 0 0 ${u(2)} ${u(13)};
  background: #191919;
`;

const Field = styled.div`
  flex: none;
  display: flex;
  align-items: center;
  width: ${(p) => u(p.$w)};
  height: ${u(30)};
  margin-left: ${(p) => u(p.$ml)};
  padding-left: ${(p) => u(p.$pl)};
  border: ${u(0.9)} solid #5a5a5a;
`;

const FieldEnd = styled.div`
  display: flex;
  align-items: center;
  height: 100%;
  margin-left: auto;
`;

const FieldRule = styled.i`
  width: ${u(0.6)};
  height: 100%;
  margin-left: ${u(10)};
  background: #111;
`;

const RefreshCell = styled.div`
  display: flex;
  justify-content: center;
  width: ${u(30)};
`;

/* ---------- body ---------- */

const Body = styled.main`
  flex: none;
  display: flex;
  height: ${u(534)};
`;

const Sidebar = styled.aside`
  flex: none;
  width: ${u(155)};
  padding: ${u(16)} ${u(2.5)} 0 0;
  background: #191919;
  border-right: ${u(0.9)} solid #2b2b2b;
`;

const TreeSection = styled.div`
  margin-bottom: ${u(8)};
`;

const TreeRow = styled.div`
  display: flex;
  align-items: center;
  height: ${u(24)};
  margin-left: ${u(1)};
  padding-left: ${(p) => u(p.$nested ? 31 : 23)};
  padding-right: ${u(2)};
  border: 0 solid transparent;
  border-width: ${u(1)} 0;
  background: ${(p) => (p.$current ? "#333333" : "transparent")};
  background-clip: padding-box;
  overflow: hidden;
`;

const PinSlot = styled.div`
  margin-left: auto;
  padding-right: ${u(0.6)};
`;

const tree = [
  [
    { icon: "star", label: "Quick access", w: 68, root: true },
    { icon: "downloads", label: "Downloads", w: 59, pin: true },
    { icon: "desktop", label: "Desktop", w: 42.8, pin: true },
    { icon: "pictures", label: "Pictures", w: 41.9, pin: true },
    { icon: "documents", label: "Documents", w: 61.1, pin: true },
    { icon: "folder", label: "FILE CETAK", w: 58.2 },
    { icon: "folder", label: "Master PPT Undangan", w: 113.6 },
    { icon: "folder", label: "Pertemuan 8 PBO2", w: 98.2 },
    { icon: "folder", label: "undangan digital", w: 89.8 },
  ],
  [{ icon: "onedrive", label: "OneDrive - Personal", w: 104.6, root: true }],
  [
    { icon: "thisPc", label: "This PC", w: 38.9, root: true },
    { icon: "objects3d", label: "3D Objects", w: 56.8 },
    { icon: "desktop", label: "Desktop", w: 42.8 },
    { icon: "documents", label: "Documents", w: 61.1, current: true },
    { icon: "downloads", label: "Downloads", w: 59 },
    { icon: "music", label: "Music", w: 32 },
    { icon: "pictures", label: "Pictures", w: 41.9 },
    { icon: "videos", label: "Videos", w: 34.9 },
    { icon: "disk", label: "Local Disk (C:)", w: 74.5 },
  ],
  [{ icon: "network", label: "Network", w: 45.1, root: true }],
];

const Files = styled.section`
  flex: 1;
  padding-left: ${u(15.6)};
  background: #202020;
`;

const FilesHeader = styled.div`
  display: flex;
  align-items: center;
  height: ${u(31)};
  padding-bottom: ${u(5.6)};
`;

const SortMark = styled.div`
  align-self: flex-start;
  margin-left: ${u(88)};
`;

const FileRow = styled.div`
  display: flex;
  align-items: center;
  width: ${u(560)};
  height: ${u(21)};
  padding-left: ${u(5.6)};
  background: ${(p) => (p.$selected ? "#777777" : "transparent")};
  box-shadow: ${(p) => (p.$selected ? `inset 0 0 0 ${u(0.8)} #868686` : "none")};
`;

const files = [
  ["ANALISIS & STRATEGI ALGORITMA", 179],
  ["API Python - Farhan Saefulah", 153.7, true],
  ["BASIS DATA", 61],
  ["JARINGAN KOMPUTER", 119],
  ["MATEMATIKA DISTRIK", 115],
  ["PBO 2", 32.2],
  ["REKAYASA PERANGKAT LUNAK", 164.2],
];

const StatusBar = styled.footer`
  flex: none;
  display: flex;
  align-items: center;
  height: ${u(23)};
  padding-left: ${u(14.2)};
  background: #333333;
`;

const StatusRule = styled.i`
  flex: none;
  width: ${u(0.8)};
  height: ${u(11)};
  margin-left: ${u(10)};
  background: #f0f0f0;
`;

const ViewButtons = styled.div`
  display: flex;
  align-items: center;
  height: 100%;
  margin-left: auto;
  padding-right: ${u(8)};
`;

const ViewButton = styled.div`
  display: flex;
  align-items: center;
  width: ${u(22)};
  height: 100%;
  margin-right: ${u(4)};
  padding-left: ${u(3.4)};
  border: ${u(0.9)} solid #888;
  background: #666;
`;

/* ---------- context menu ---------- */

const Menu = styled.div`
  position: absolute;
  left: ${u(365.3)};
  top: ${u(143)};
  width: ${u(418.4)};
  height: ${u(595)};
  padding: ${u(4)} ${u(2.2)};
  border: ${u(1)} solid #a0a0a0;
  background: #2b2b2b;
  box-shadow: ${u(4)} ${u(4)} ${u(4)} ${u(-2)} rgba(0, 0, 0, 0.6);
`;

const MenuItem = styled.div`
  display: flex;
  align-items: center;
  height: ${u(22)};
  padding: 0 ${u(7.6)} 0 ${u(7.8)};
  background: ${(p) => (p.$hot ? "#414141" : "transparent")};
`;

const MenuIcon = styled.div`
  flex: none;
  width: ${u(24)};
`;

const MenuRule = styled.hr`
  height: ${u(1)};
  margin: ${u(3)} ${u(7.8)};
  border: 0;
  background: #808080;
`;

const menu = [
  [
    { label: "Open", w: 30.1, bold: true },
    { label: "Open in new window", w: 112 },
    { label: "Pin to Quick access", w: 102.2 },
    { label: "Add to VLC media player's Playlist", w: 179, icon: "vlc" },
    { label: "Browse in Adobe Bridge CS6", w: 149.2 },
    { label: "Git GUI Here", w: 65.2, icon: "git" },
    { label: "Git Bash Here", w: 71, icon: "git" },
    { label: "Open command window here as administrator", w: 246.6, icon: "cmdAdmin", hot: true },
    { label: "Play with VLC media player", w: 143, icon: "vlc" },
    { label: "Scan with Microsoft Defender...", w: 164.8, icon: "defender" },
  ],
  [
    { label: "Give access to", w: 74, sub: true },
    { label: "Restore previous versions", w: 133 },
    { label: "Include in library", w: 88.2, sub: true },
    { label: "Pin to Start", w: 58 },
    { label: "Add to archive...", w: 85.8, icon: "rar" },
    { label: 'Add to "API Python - Farhan Saefulah.rar"', w: 219.6, icon: "rar" },
    { label: "Compress and email...", w: 116.8, icon: "rar" },
    { label: 'Compress to "API Python - Farhan Saefulah.rar" and email', w: 306, icon: "rar" },
  ],
  [{ label: "Send to", w: 39.8, sub: true }],
  [
    { label: "Cut", w: 18.8 },
    { label: "Copy", w: 28 },
  ],
  [
    { label: "Create shortcut", w: 81 },
    { label: "Delete", w: 33.2 },
    { label: "Rename", w: 43.2 },
  ],
  [{ label: "Properties", w: 52.8 }],
];

const ContextMenu = () => (
  <Menu>
    {menu.map((section, s) => (
      <React.Fragment key={s}>
        {s > 0 && <MenuRule />}
        {section.map((item) => (
          <MenuItem key={item.label} $hot={item.hot}>
            <MenuIcon>{item.icon && <Icon name={item.icon} />}</MenuIcon>
            <Text w={item.w} weight={item.bold ? 700 : 400} lift={0}>{item.label}</Text>
            {item.sub && <FieldEnd><Icon name="submenu" /></FieldEnd>}
          </MenuItem>
        ))}
      </React.Fragment>
    ))}
  </Menu>
);

/* ---------- taskbar ---------- */

const Taskbar = styled.div`
  flex: none;
  display: flex;
  align-items: center;
  height: ${u(30)};
  padding-left: ${u(10)};
  background: linear-gradient(
    90deg,
    #25241f 0%,
    #26221e 33%,
    #2b231c 36%,
    #33291f 44%,
    #352b20 57%,
    #33261d 64%,
    #2a231e 68%,
    #22221e 73%,
    #27231f 80%,
    #22221f 90%,
    #26221e 100%
  );
`;

const SearchBox = styled.div`
  flex: none;
  display: flex;
  align-items: center;
  width: ${u(257.6)};
  height: 100%;
  margin-left: ${u(10)};
  padding-left: ${u(11)};
  border: ${u(0.9)} solid #5c5c5c;
  background: #323232;
`;

const TaskButton = styled.div`
  flex: none;
  display: flex;
  align-items: center;
  width: ${(p) => u(p.$w)};
  height: 100%;
  margin-left: ${(p) => u(p.$ml)};
  padding-left: ${(p) => u(p.$pl)};
  background: ${(p) => (p.$active ? "#55504a" : "transparent")};
  box-shadow: inset 0 ${u(-2)} 0 #8be6ea;
`;

const DesktopEdge = styled.i`
  width: ${u(0.8)};
  height: 100%;
  margin-left: ${u(20)};
  background: #777;
`;

const TaskbarRow = () => (
  <Taskbar>
    <Icon name="windows" />
    <SearchBox>
      <Icon name="lensBig" />
      <Text w={43.7} ml={11.6} size={14.6} color="#d6d6d6" lift={0}>Search</Text>
      <Icon name="tennis" ml={120.4} />
    </SearchBox>
    <TaskButton $w={160} $ml={3} $pl={10} $active>
      <Icon name="folder" />
      <Text w={63.4} ml={4}>SEMESTER 4</Text>
    </TaskButton>
    <Icon name="photoshop" ml={11} />
    <TaskButton $w={152} $ml={15} $pl={4.2}>
      <Icon name="chrome" />
      <Text w={121.4} ml={4.2}>GitHub - freddywicak...</Text>
    </TaskButton>
    <Icon name="vscode" ml={14.8} />
    <Icon name="corel" ml={20.8} />
    <Icon name="xampp" ml={20.6} />
    <Icon name="snip" ml={22} />
    <Icon name="brave" ml={22.4} />
    <TaskButton $w={152.4} $ml={16} $pl={4.8}>
      <Icon name="notepad" />
      <Text w={118} ml={4}>step praktikum api - ...</Text>
    </TaskButton>
    <Icon name="weather" ml={47.4} />
    <Text w={28.2} ml={8.4} size={14.2}>33°C</Text>
    <Icon name="trayUp" ml={19.6} />
    <Icon name="mic" ml={11.4} />
    <Icon name="wifi" ml={14} mt={2} />
    <Icon name="battery" ml={8.8} />
    <Icon name="speaker" ml={7.6} />
    <Text w={22.4} ml={9.6}>ENG</Text>
    <Text w={26} ml={14} size={12.2}>14:04</Text>
    <Icon name="action" ml={18.2} />
    <DesktopEdge />
  </Taskbar>
);

/* ---------- diagonal name stamps ---------- */

const StampLayer = styled.svg`
  position: absolute;
  inset: 0;
  width: 100%;
  height: 100%;
  pointer-events: none;
`;

const Stamps = () => {
  const marks = [];
  for (let i = -4; i <= 6; i++) {
    for (let j = -4; j <= 6; j++) {
      const x = 527.4 + i * 224.6 + j * 27.5;
      const y = 259.4 + i * 63.85 + j * 195.85;
      if (x > -20 && x < 1560 && y > -40 && y < 900) marks.push([x, y]);
    }
  }
  return (
    <StampLayer viewBox="0 0 1366 768">
      {marks.map(([x, y]) => (
        <text
          key={`${x},${y}`}
          transform={`translate(${x} ${y}) rotate(-36.25)`}
          x="-184.6"
          y="15.8"
          textLength="183.8"
          lengthAdjust="spacingAndGlyphs"
          fontFamily='Roboto, "Liberation Sans", sans-serif'
          fontWeight="900"
          fontSize="21.4"
          fill="#969e9c"
          stroke="#969e9c"
          strokeWidth="1.3"
          opacity="0.22"
        >
          FARHAN SAEFULAH
        </text>
      ))}
    </StampLayer>
  );
};

export default function App() {
  return (
    <Screen>
      <GlobalStyle />
      <Gradients />
      <TitleBar>
        <Icon name="folder" />
        <TitleDivider $ml={6.6} />
        <Icon name="docCheck" ml={9.8} mt={1} />
        <Icon name="folder" ml={9.2} mt={1} />
        <Icon name="undoPc" ml={6.4} mt={1} />
        <Icon name="dropBar" ml={6.4} mt={3} />
        <TitleDivider $ml={7} />
        <Text w={63} ml={6.2}>SEMESTER 4</Text>
        <WindowButtons>
          <WindowButton><Icon name="minimize" /></WindowButton>
          <WindowButton><Icon name="restore" /></WindowButton>
          <WindowButton><Icon name="close" /></WindowButton>
        </WindowButtons>
      </TitleBar>
      <TabRow>
        <Tab $w={56.3} $kind="file"><Text w={17.2} color="#0a0a0a">File</Text></Tab>
        <Tab $w={57.6} $kind="active"><Text w={29.4}>Home</Text></Tab>
        <Tab $w={59.4}><Text w={28.4}>Share</Text></Tab>
        <Tab $w={52.4}><Text w={25.4}>View</Text></Tab>
        <TabTools>
          <Icon name="ribbonUp" />
          <Icon name="help" ml={9} />
        </TabTools>
      </TabRow>
      <RibbonBar />
      <NavBar>
        <Icon name="back" />
        <Icon name="forward" ml={18.2} />
        <Icon name="recent" ml={12.6} mt={-1} />
        <Icon name="up" ml={10.4} mt={1} />
        <Field $w={1034.2} $ml={7} $pl={3.8}>
          <Icon name="folder" mt={-2} />
          <Icon name="crumb" ml={7.8} />
          <Text w={38.2} ml={9.8}>This PC</Text>
          <Icon name="crumb" ml={9.7} />
          <Text w={60.7} ml={9.9}>Documents</Text>
          <Icon name="crumb" ml={9.5} />
          <Text w={40.3} ml={9.9}>KULIAH</Text>
          <Icon name="crumb" ml={9.5} />
          <Text w={63} ml={9.9}>SEMESTER 4</Text>
          <FieldEnd>
            <Icon name="addrDown" mt={2} />
            <FieldRule />
            <RefreshCell><Icon name="refresh" mt={1} /></RefreshCell>
          </FieldEnd>
        </Field>
        <Field $w={202.2} $ml={11.6} $pl={14}>
          <Icon name="lensSmall" />
          <Text w={100.6} ml={13} color="#7a7a7a">Search SEMESTER 4</Text>
        </Field>
      </NavBar>
      <Body>
        <Sidebar>
          {tree.map((section, s) => (
            <TreeSection key={s}>
              {section.map((item) => (
                <TreeRow key={item.label} $nested={!item.root} $current={item.current}>
                  <Icon name={item.icon} ml={item.icon === "folder" ? 2 : 0} />
                  <Text w={item.w} ml={5.3}>{item.label}</Text>
                  {item.pin && <PinSlot><Icon name="pinSmall" /></PinSlot>}
                </TreeRow>
              ))}
            </TreeSection>
          ))}
        </Sidebar>
        <Files>
          <FilesHeader>
            <Text w={32.2} ml={2.6} color="#dcdcdc">Name</Text>
            <SortMark><Icon name="sortUp" /></SortMark>
          </FilesHeader>
          {files.map(([label, w, selected]) => (
            <FileRow key={label} $selected={selected}>
              <Icon name="folder" mt={-1} />
              <Text w={w} ml={4}>{label}</Text>
            </FileRow>
          ))}
        </Files>
      </Body>
      <StatusBar>
        <Text w={38.1} color="#dcdcdc" lift={0}>7 items</Text>
        <StatusRule />
        <Text w={78} ml={11} color="#dcdcdc" lift={0}>1 item selected</Text>
        <StatusRule />
        <ViewButtons>
          <ViewButton><Icon name="viewDetails" /></ViewButton>
          <Icon name="viewLarge" mt={-1} />
        </ViewButtons>
      </StatusBar>
      <TaskbarRow />
      <ContextMenu />
      <Stamps />
    </Screen>
  );
}
